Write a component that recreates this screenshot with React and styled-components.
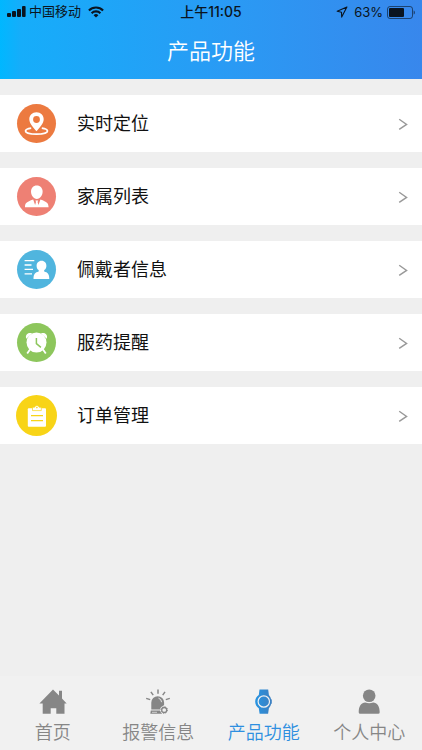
import React from 'react';
import styled, { createGlobalStyle } from 'styled-components';

const colors = {
  text: '#111',
  page: '#efefef',
  bar: '#f1f1f1',
  grey: '#868686',
  arrow: '#999',
  active: '#2e8fe0'
};

const GlobalStyle = createGlobalStyle`
  * {
    box-sizing: border-box;
  }
  body {
    margin: 0;
    background: ${colors.page};
    color: ${colors.text};
    font-family: 'Liberation Sans', 'Noto Sans CJK SC', sans-serif;
  }
`;

const Page = styled.div`
  display: flex;
  flex-direction: column;
  min-height: 100vh;
`;

const Header = styled.header`
  background: linear-gradient(to right, #00b7ff 0%, #16adfa 5%, #2a9af4 55%, #3887ec 100%);
`;

const StatusBar = styled.div`
  display: grid;
  grid-template-columns: 1fr auto 1fr;
  align-items: center;
  height: 24px;
  padding: 0 7px;
  color: #0a1420;
  line-height: 24px;
`;

const StatusGroup = styled.div`
  display: flex;
  align-items: center;
  justify-content: ${props => (props.$end ? 'flex-end' : 'flex-start')};
  gap: ${props => (props.$end ? '4px' : '3px')};
`;

const Carrier = styled.span`
  margin-right: 4px;
  font-size: 13px;
`;

const Clock = styled.time`
  font-family: Inter, 'Noto Sans CJK SC', sans-serif;
  font-size: 14px;
  font-weight: 500;
`;

const Battery = styled.span`
  margin-left: 2px;
  font-family: Inter, sans-serif;
  font-size: 13px;
`;

const Title = styled.h1`
  margin: 0;
  padding: 12px 0 11px;
  color: #fff;
  font-size: 22px;
  font-weight: 350;
  line-height: 32px;
  text-align: center;
`;

const Menu = styled.ul`
  display: flex;
  flex: 1;
  flex-direction: column;
  gap: 16px;
  margin: 0;
  padding: 16px 0;
  list-style: none;
`;

const MenuLink = styled.a`
  display: flex;
  align-items: center;
  gap: 20px;
  height: 57px;
  padding: 0 14px 0 16px;
  background: #fff;
  color: ${colors.text};
  font-size: 18px;
  line-height: 24px;
  text-decoration: none;
`;

const MenuLabel = styled.span`
  flex: 1;
`;

const TabBar = styled.nav`
  position: sticky;
  bottom: 0;
  display: grid;
  grid-template-columns: repeat(4, 1fr);
  height: 74px;
  background: ${colors.bar};
`;

const Tab = styled.a`
  display: flex;
  flex-direction: column;
  align-items: center;
  gap: 6px;
  padding-top: 11px;
  color: ${props => (props.$active ? colors.active : colors.grey)};
  font-size: 18px;
  font-weight: 350;
  line-height: 24px;
  text-decoration: none;
`;

const SignalIcon = () => (
  <svg width="19" height="12" viewBox="0 0 19 12" fill="currentColor" aria-hidden="true">
    <rect x="0" y="7" width="4" height="4" rx="1" />
    <rect x="5" y="5" width="4" height="6" rx="1" />
    <rect x="10" y="3" width="4" height="8" rx="1" />
    <rect x="15" y="0" width="3.6" height="11" rx="1" />
  </svg>
);

const WifiIcon = () => (
  <svg width="16" height="12" viewBox="0 0 16 12" fill="none" stroke="currentColor" strokeWidth="2.1" aria-hidden="true">
    <path d="M.9 4.4a10.2 10.2 0 0 1 14.2 0" />
    <path d="M3.6 7.2a6.3 6.3 0 0 1 8.8 0" />
    <path d="M8 11.6 5.6 9.2a3.5 3.5 0 0 1 4.8 0z" fill="currentColor" stroke="none" />
  </svg>
);

const LocationIcon = () => (
  <svg width="12" height="12" viewBox="0 0 12 12" fill="none" stroke="currentColor" strokeWidth="1.1" strokeLinejoin="round" aria-hidden="true">
    <path d="M10.9 1.1 1.2 5.3l4.3 1 .2 4.8z" />
  </svg>
);

const BatteryIcon = () => (
  <svg width="28" height="13" viewBox="0 0 28 13" aria-hidden="true">
    <rect x=".5" y=".5" width="25" height="12" rx="2.5" fill="none" stroke="currentColor" strokeOpacity=".6" />
    <rect x="2" y="2" width="15" height="9" rx="1" fill="currentColor" />
    <path d="M26.600 4.400c1.800.6 1.800 3.600 0 4.200z" fill="currentColor" opacity=".6" />
  </svg>
);

const ArrowIcon = () => (
  <svg width="10" height="13" viewBox="0 0 10 13" fill="none" stroke={colors.arrow} strokeWidth="1.4" aria-hidden="true">
    <path d="M1.2 2.2 8.6 7.4 1.2 12.4" />
  </svg>
);

const glyphs = {
  pin: (
    <>
      <path
        fillRule="evenodd"
        d="M20.5 9.3c-4.200 0-7.200 3-7.200 7 0 4.300 4.200 8.400 7.200 12 3-3.600 7.200-7.700 7.200-12 0-4-3-7-7.200-7zm0 3.800a3.400 3.400 0 1 1 0 6.800 3.400 3.400 0 0 1 0-6.800z"
      />
      <path
        d="M15.2 25.200c-3.400.5-5.700 1.500-5.700 2.800 0 1.800 4.800 3.200 11 3.200s11-1.400 11-3.200c0-1.300-2.300-2.300-5.700-2.800"
        fill="none"
        stroke="#fff"
        strokeWidth="1.700"
      />
    </>
  ),
  family: (
    <>
      <path d="M20.800 9.500c-3.600 0-5.800 2.600-5.800 6.100 0 3.700 2.400 7.400 5.800 7.400s5.800-3.700 5.800-7.400c0-3.500-2.200-6.100-5.800-6.100z" />
      <path d="M9 31.200c0-4 1.400-5.200 8.200-7.600l1.900 5.400.9-3-.6-1.600h2.800l-.6 1.600.9 3 1.900-5.400c6.800 2.400 7.900 3.600 8.200 7.600z" />
    </>
  ),
  wearer: (
    <>
      <path d="M8.600 11.600h9.700M8.600 16h6.900M8.600 20.300h8.400M8.600 24.800h7.400" stroke="#fff" strokeWidth="1.300" />
      <path d="M25.600 11.800c-3.200 0-5 2.300-5 5.100 0 1.700.8 3.300 2.100 4.200v1.500c-3.600.9-5.200 2.700-5.200 7.300h15.800c0-4.600-1.600-6.400-5.100-7.300v-1.500c1.300-.9 2.200-2.500 2.200-4.200 0-2.800-1.700-5.100-4.800-5.100z" />
    </>
  ),
  alarm: (
    <>
      <circle cx="20.500" cy="20.600" r="10" />
      <path d="M10.300 16.700c-1.600-4 2-7 5.800-5.300zM30.700 16.700c1.600-4-2-7-5.800-5.300z" />
      <path d="m14 27.400-2.800 4M27 27.400l2.800 4" stroke="#fff" strokeWidth="1.800" />
      <path d="M20.400 16v5.600l4.500 3.700" fill="none" stroke="#8dc65c" strokeWidth="1.500" />
    </>
  ),
  order: (
    <>
      <path d="M12.700 13.300h16.400q.9 0 .9.900v16.600q0 .9-.9.900H12.700q-.9 0-.9-.9V14.200q0-.9.900-.9z" />
      <path
        d="M16.500 15.600v-3.400h2.100a2.400 2.400 0 0 1 4.600 0h2.100v3.400z"
        stroke="#f8d417"
        strokeWidth=".7"
      />
      <circle cx="20.900" cy="12.600" r=".8" fill="#f8d417" />
      <path d="M15 20.700h12M15 25.600h12" stroke="#f8d417" strokeWidth="1.300" />
    </>
  )
};

const BadgeIcon = ({ name, color, radius = 19.5 }) => (
  <svg width="41" height="41" viewBox="0 0 41 41" fill="#fff" aria-hidden="true">
    <circle cx="20.500" cy="20.500" r={radius} fill={color} />
    {glyphs[name]}
  </svg>
);

const HomeIcon = () => (
  <svg width="28" height="28" viewBox="0 0 28 28" fill="currentColor" aria-hidden="true">
    <path d="M14 2.500 20 8.500V3.800h3v7.700l4.700 5h-2.200v10.300h-8.200v-5.600h-5.600v5.600H3.700V16.500H.4z" />
  </svg>
);

const SirenIcon = () => (
  <svg width="28" height="28" viewBox="0 0 28 28" fill="currentColor" aria-hidden="true">
    <path d="M7.300 22.600v-7a6.400 6.400 0 0 1 12.800 0v2.600a4.700 4.700 0 0 0-2.800 4.400zM6.800 23.600h10.700l.7 3.100H6.300z" />
    <path
      d="M14 2.500v4.300M6.900 4.900l2.300 3.200M21 4.900l-2.300 3.200M2.200 11.400l4 1.200M25.800 11.400l-4 1.200"
      stroke="currentColor"
      strokeWidth="1.500"
    />
    <path d="M14.500 11.200q2.800.7 3.100 4" fill="none" stroke={colors.bar} strokeWidth=".9" />
    <circle cx="20.200" cy="23" r="4.200" fill={colors.bar} />
    <circle cx="20.200" cy="23" r="2.500" fill="none" stroke="currentColor" strokeWidth="1.300" />
    <circle cx="20.200" cy="23" r="3.300" fill="none" stroke="currentColor" strokeDasharray="1.200 1.390" />
    <path d="M8 25.300h5" stroke={colors.bar} strokeWidth=".7" />
  </svg>
);

const WatchIcon = () => (
  <svg width="28" height="28" viewBox="0 0 28 28" aria-hidden="true">
    <defs>
      <linearGradient id="watch" x1="0" x2="1">
        <stop offset="0" stopColor="#2794e2" />
        <stop offset="1" stopColor="#3d7fc0" />
      </linearGradient>
    </defs>
    <path
      d="M9.500 2.500h8.700l.7 5.400a8 8 0 0 1 2.200 4.300l.7.400v4l-.7.400a8 8 0 0 1-2.200 4.300l-.8 5.500H9.600l-.8-5.500a8 8 0 0 1 0-13.400z"
      fill="url(#watch)"
    />
    <circle cx="13.800" cy="14.500" r="5.700" fill="none" stroke={colors.bar} strokeWidth="1.200" />
  </svg>
);

const ProfileIcon = () => (
  <svg width="28" height="28" viewBox="0 0 28 28" fill="currentColor" aria-hidden="true">
    <circle cx="14.200" cy="8.700" r="6.300" />
    <path d="M3.700 25.200c0-6.200 2.700-9.700 6.500-9.700q4 1.600 8 0c3.800 0 6.500 3.500 6.500 9.700q0 1.500-1.500 1.500h-18q-1.500 0-1.500-1.500z" />
  </svg>
);

const menuItems = [
  { icon: 'pin', label: '实时定位', color: '#ec7a40' },
  { icon: 'family', label: '家属列表', color: '#ee8074' },
  { icon: 'wearer', label: '佩戴者信息', color: '#50b5de' },
  { icon: 'alarm', label: '服药提醒', color: '#8dc65c' },
  { icon: 'order', label: '订单管理', color: '#f8d417', radius: 20.5 }
];

const tabs = [
  { label: '首页', Icon: HomeIcon },
  { label: '报警信息', Icon: SirenIcon },
  { label: '产品功能', Icon: WatchIcon, active: true },
  { label: '个人中心', Icon: ProfileIcon }
];

const App = () => (
  <Page>
    <GlobalStyle />
    <Header>
      <StatusBar>
        <StatusGroup>
          <SignalIcon />
          <Carrier>中国移动</Carrier>
          <WifiIcon />
        </StatusGroup>
        <Clock>上午11:05</Clock>
        <StatusGroup $end>
          <LocationIcon />
          <Battery>63%</Battery>
          <BatteryIcon />
        </StatusGroup>
      </StatusBar>
      <Title>产品功能</Title>
    </Header>
    <Menu>
      {menuItems.map(({ icon, label, color, radius }) => (
        <li key={icon}>
          <MenuLink href={`#${icon}`}>
            <BadgeIcon name={icon} color={color} radius={radius} />
            <MenuLabel>{label}</MenuLabel>
            <ArrowIcon />
          </MenuLink>
        </li>
      ))}
    </Menu>
    <TabBar>
      {tabs.map(({ label, Icon, active }) => (
        <Tab key={label} href="#" $active={active} aria-current={active ? 'page' : undefined}>
          <Icon />
          {label}
        </Tab>
      ))}
    </TabBar>
  </Page>
);

export default App;
